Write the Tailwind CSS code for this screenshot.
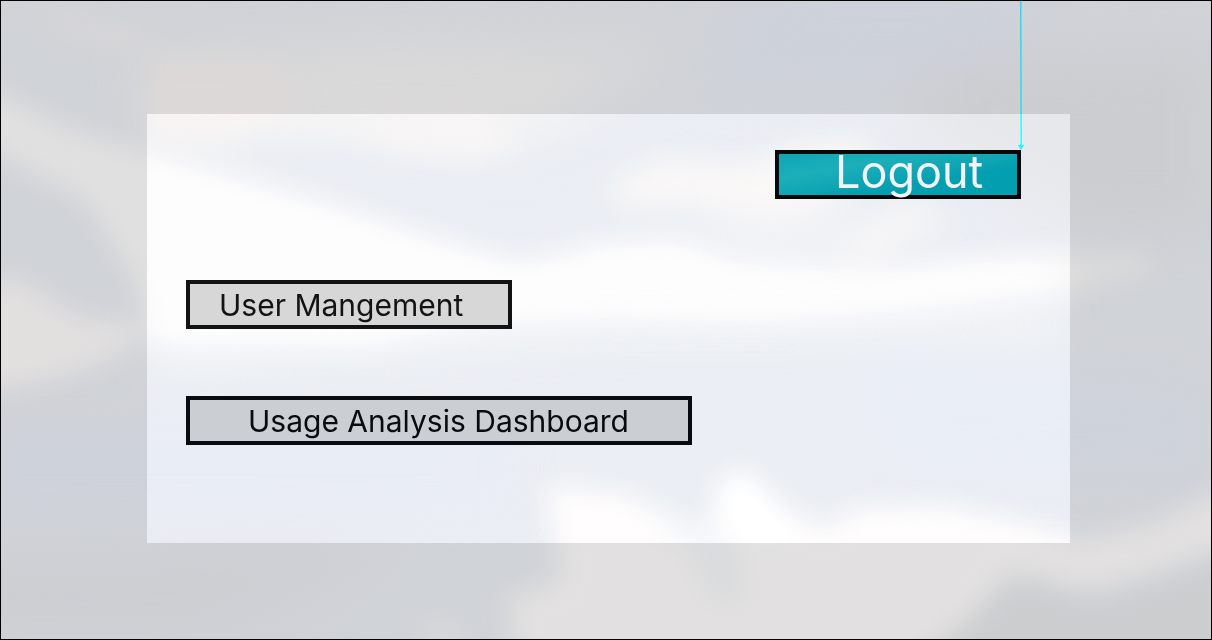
<!DOCTYPE html>
<html lang="en">
<head>
<meta charset="utf-8">
<meta name="viewport" content="width=device-width, initial-scale=1">
<title>Admin menu</title>
<script src="https://cdn.jsdelivr.net/npm/@tailwindcss/browser@4"></script>
</head>
<body class="relative isolate flex min-h-screen flex-col overflow-x-hidden border border-black bg-[#cfd2d7] pt-[113px] pr-[141px] pb-24 pl-[146px] font-['Inter',sans-serif]">
  <!-- Cloudy sky backdrop -->
  <svg class="absolute inset-0 -z-10 h-full w-full" viewBox="0 0 1212 640" preserveAspectRatio="none" aria-hidden="true">
    <defs>
      <filter id="soft" x="-20%" y="-20%" width="140%" height="140%" color-interpolation-filters="sRGB"><feGaussianBlur stdDeviation="13"/></filter>
      <filter id="wide" x="-30%" y="-30%" width="160%" height="160%" color-interpolation-filters="sRGB"><feGaussianBlur stdDeviation="26"/></filter>
    </defs>
    <rect width="1212" height="640" fill="#d0d3d8"/>
    <g filter="url(#wide)">
      <path d="M780 -40H1060L1000 70L700 90Z" fill="#cdd1da"/>
      <path d="M940 60L1212 50V230L1080 230L900 130Z" fill="#cccdd1"/>
      <path d="M-40 440H500V500H-40Z" fill="#cdd1da"/>
      <path d="M-40 560L400 540L200 640H-40Z" fill="#ccced2"/>
      <path d="M850 350L1212 390V480L900 470Z" fill="#ced2da"/>
      <path d="M130 60L380 40L680 50L560 115L480 150L150 145Z" fill="#dad9d9"/>
      <path d="M150 300H1060V330L600 330L150 360Z" fill="#dbdcde"/>
    </g>
    <g filter="url(#soft)">
      <path d="M20 10L120 22L170 45L120 50L70 38Z" fill="#d8d6d7"/>
      <path d="M150 60L260 60L300 90L250 130L150 140Z" fill="#dcd8d7"/>
      <path d="M340 115L480 100L520 140L480 160L400 155Z" fill="#dbd9d9"/>
      <path d="M240 140L480 165L620 180L600 235L500 245L380 205L240 165Z" fill="#cfd2d7"/>
      <path d="M-30 80L60 125L145 152L220 172L330 204L440 240L520 262L570 252L600 242L680 238L740 262L880 270L960 260L1070 252L1090 290L900 312L760 322L600 318L460 326L360 346L250 342L150 342L145 310L125 265L85 200L-30 140Z" fill="#e1e0e0"/>
      <path d="M-40 280L20 280L80 318L150 326L110 360L50 380L-40 398Z" fill="#e2dfdf"/>
      <path d="M1040 258L1140 256L1160 270L1060 288Z" fill="#dddcdb"/>
      <path d="M610 185L660 158L740 165L800 145L850 138L880 155L840 200L780 222L700 205L620 205Z" fill="#dddbdb"/>
      <path d="M900 200L945 208L900 235L880 262L830 260Z" fill="#dad8d9"/>
      <path d="M680 210L960 215L900 260L740 260Z" fill="#d9d9db" opacity=".5"/>
      <path d="M545 486L620 494L670 515L700 530L725 490L755 480L785 510L825 530L860 508L940 506L1020 522L1080 540L1150 525L1212 495L1250 485V540L1150 575L1090 592L1010 575L970 620L910 680H520L505 600L560 580L555 540Z" fill="#e2e0e0"/>
      <path d="M715 485L745 470L785 510L790 550L745 550Z" fill="#e3e3e3"/>
      <path d="M650 525L710 515L735 545L742 600L715 600L690 550Z" fill="#d3d7dc" opacity=".6"/>
      <path d="M1020 578L1100 603L1250 555V680H905L970 620Z" fill="#cbcdcf"/>
      <path d="M415 640L430 625L450 625L470 650Z" fill="#dddbdc"/>
    </g>
  </svg>

  <!-- Measure arrow pinned to the Logout button's right edge -->
  <svg class="absolute top-0 right-[187px] h-[149px] w-1.5" viewBox="0 0 6 149" aria-hidden="true">
    <path d="M2.7 0L3.2 144" stroke="#22dcec" stroke-width="1.4" fill="none"/>
    <path d="M0 144H6L3 149Z" fill="#10dcee"/>
  </svg>

  <main class="flex flex-1 flex-col items-start pt-9 pr-[49px] pb-24 pl-[39px] backdrop-brightness-[1.13]">
    <button type="button" class="flex h-[49px] w-[246px] items-center self-end border-4 border-[#07080a] bg-linear-to-br from-[#0ba6b4] from-0% via-[#1cafba] via-30% to-[#039fb0] to-65% pb-1.5 pl-14 text-[45px] leading-none whitespace-nowrap text-[#f1f3f7]">Logout</button>
    <nav class="mt-[81px] flex w-full flex-col items-start gap-[67px]" aria-label="Admin">
      <button type="button" class="flex h-[49px] w-[326px] items-center border-4 border-[#121314] bg-[#d8d7d8] pl-[29px] text-[30px] leading-none whitespace-nowrap text-[#121314]">User Mangement</button>
      <button type="button" class="flex h-[49px] w-[506px] items-center border-4 border-[#080b10] bg-[#cbced3] pl-[58px] text-[30px] leading-none whitespace-nowrap text-[#080b10]">Usage Analysis Dashboard</button>
    </nav>
  </main>
</body>
</html>
